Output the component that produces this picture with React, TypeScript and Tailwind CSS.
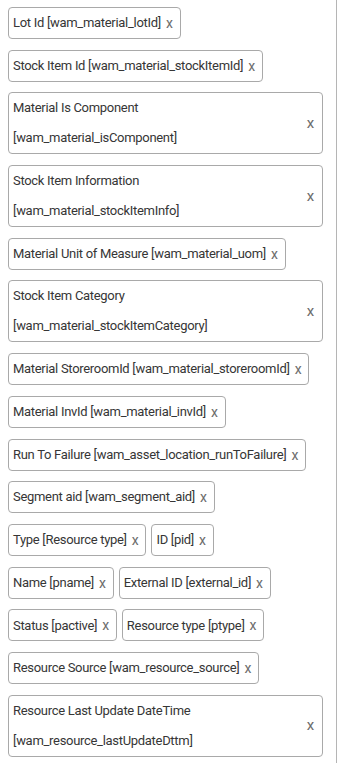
import React from "react";

type Chip = { label: string; tall?: [string, string] };

const rows: Chip[][] = [
  [{ label: "Lot Id [wam_material_lotId]" }],
  [{ label: "Stock Item Id [wam_material_stockItemId]" }],
  [{ label: "", tall: ["Material Is Component", "[wam_material_isComponent]"] }],
  [{ label: "", tall: ["Stock Item Information", "[wam_material_stockItemInfo]"] }],
  [{ label: "Material Unit of Measure [wam_material_uom]" }],
  [{ label: "", tall: ["Stock Item Category", "[wam_material_stockItemCategory]"] }],
  [{ label: "Material StoreroomId [wam_material_storeroomId]" }],
  [{ label: "Material InvId [wam_material_invId]" }],
  [{ label: "Run To Failure [wam_asset_location_runToFailure]" }],
  [{ label: "Segment aid [wam_segment_aid]" }],
  [{ label: "Type [Resource type]" }, { label: "ID [pid]" }],
  [{ label: "Name [pname]" }, { label: "External ID [external_id]" }],
  [{ label: "Status [pactive]" }, { label: "Resource type [ptype]" }],
  [{ label: "Resource Source [wam_resource_source]" }],
  [{ label: "", tall: ["Resource Last Update DateTime", "[wam_resource_lastUpdateDttm]"] }],
];

function ChipView({ chip }: { chip: Chip }) {
  if (chip.tall) {
    return (
      <div className="flex w-[315px] h-[62px] items-center justify-between rounded-[4px] border border-[#a9a9a9] pl-[4px] pr-[8px] bg-white">
        <div className="flex flex-col leading-[30px]">
          <span>{chip.tall[0]}</span>
          <span>{chip.tall[1]}</span>
        </div>
        <span className="text-[#6b6b6b] text-[15px] leading-none">x</span>
      </div>
    );
  }
  return (
    <div className="inline-flex h-[32px] items-center rounded-[4px] border border-[#a9a9a9] pl-[4px] pr-[7px] bg-white whitespace-nowrap">
      <span>{chip.label}</span>
      <span className="ml-[5px] text-[#6b6b6b] text-[14px] leading-none">x</span>
    </div>
  );
}

export default function App() {
  return (
    <div
      className="relative w-[346px] h-[763px] overflow-hidden bg-white text-[#363636] text-[13px] tracking-[-0.3px]"
      style={{ fontFamily: "Roboto, sans-serif" }}
    >
      <div className="flex h-full">
        <div className="w-[337px] h-full border-r border-[#b5b5b5] pl-[8px] pt-[7px]">
          <div className="flex flex-col gap-[10.7px]">
            {rows.map((r, i) => (
              <div key={i} className="flex gap-[5px]">
                {r.map((c, j) => (
                  <ChipView key={j} chip={c} />
                ))}
              </div>
            ))}
          </div>
        </div>
        <div className="flex-1 bg-white" />
      </div>
    </div>
  );
}
